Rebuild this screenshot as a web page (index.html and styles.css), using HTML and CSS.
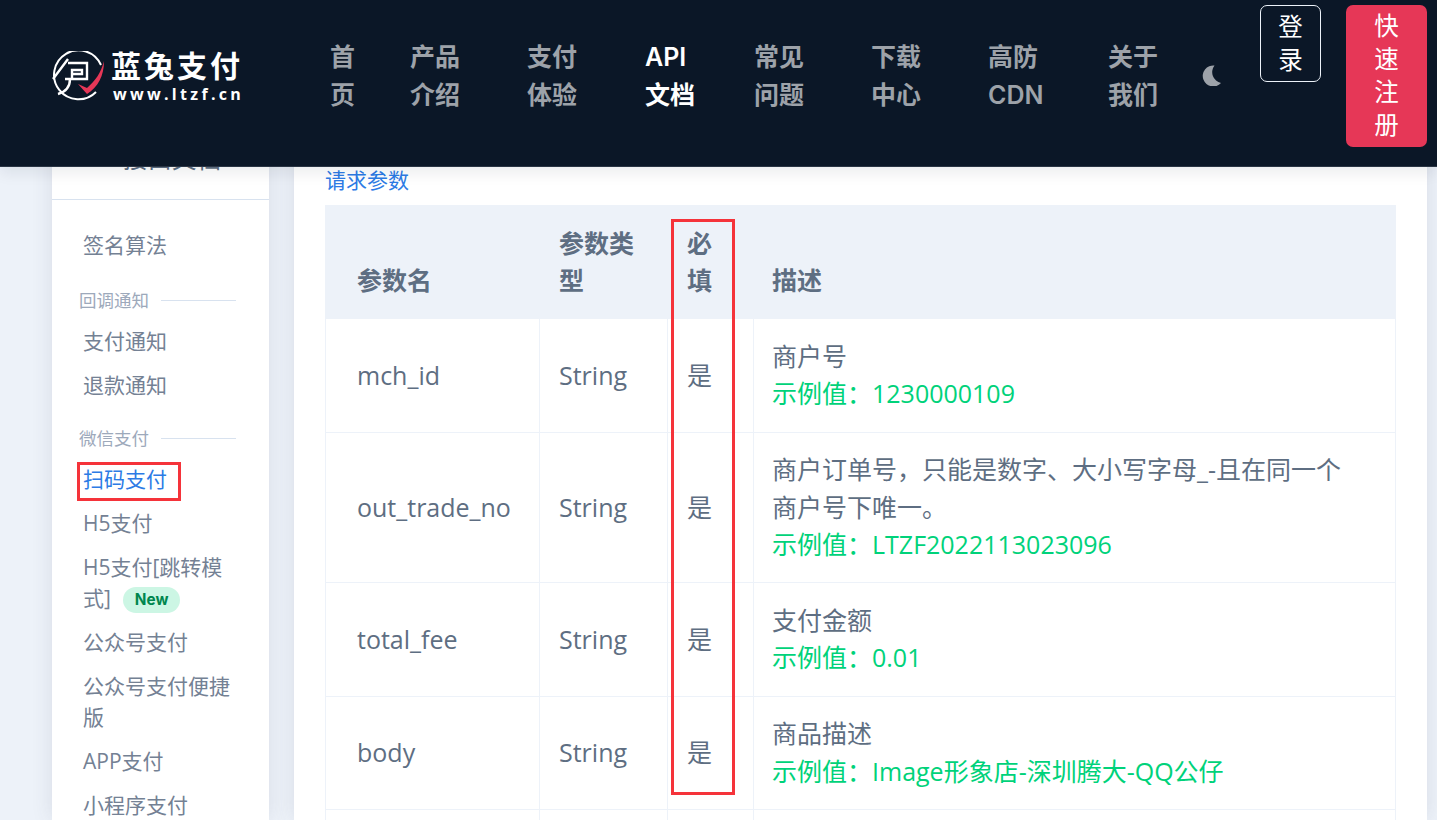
FILE: index.html
```html
<!DOCTYPE html>
<html lang="zh-CN">
<head>
<meta charset="utf-8">
<title>蓝兔支付 API文档</title>
<link rel="stylesheet" href="styles.css">
</head>
<body>
<header class="topbar">
  <a class="logo">
    <svg class="logo-mark" viewBox="0 0 54 52" width="54" height="52" aria-hidden="true">
      <path d="M49 14A24.5 24.5 0 1 0 44 41" fill="none" stroke="#fff" stroke-width="2"/>
      <path d="M16 8L1 28M16 12H35V28H13M20 19H30V23H20ZM20 19V28M18 28C18 36 13 41 6 43" fill="none" stroke="#fff" stroke-width="2.4"/>
      <path d="M26 33L35 37C43 30 49 22 52 10C52 25 46 36 35 43Z" fill="#e63757"/>
    </svg>
    <span class="logo-text">
      <span class="logo-name">蓝兔支付</span>
      <span class="logo-url">www.ltzf.cn</span>
    </span>
  </a>
  <nav class="nav">
    <a class="nav-link nav-narrow">首页</a>
    <a class="nav-link">产品介绍</a>
    <a class="nav-link">支付体验</a>
    <a class="nav-link nav-active">API文档</a>
    <a class="nav-link">常见问题</a>
    <a class="nav-link">下载中心</a>
    <a class="nav-link">高防CDN</a>
    <a class="nav-link">关于我们</a>
  </nav>
  <svg class="moon" viewBox="0 0 20 21" width="20" height="21" aria-hidden="true">
    <path d="M13.5 .5A10.5 10.5 0 1 0 20 18A11 11 0 0 1 13.5 .5Z" fill="#9da2a9"/>
  </svg>
  <a class="btn btn-outline">登录</a>
  <a class="btn btn-danger">快速注册</a>
</header>

<div class="page">
  <aside class="side">
    <div class="side-title">接口文档</div>
    <ul class="side-list">
      <li class="side-item">签名算法</li>
      <li class="side-label">回调通知</li>
      <li class="side-item">支付通知</li>
      <li class="side-item">退款通知</li>
      <li class="side-label side-label-tight">微信支付</li>
      <li class="side-item side-current">扫码支付</li>
      <li class="side-item">H5支付</li>
      <li class="side-item">H5支付[跳转模式] <span class="badge">New</span></li>
      <li class="side-item">公众号支付</li>
      <li class="side-item">公众号支付便捷版</li>
      <li class="side-item">APP支付</li>
      <li class="side-item">小程序支付</li>
    </ul>
  </aside>
  <main class="card">
    <a class="section-link">请求参数</a>
    <table class="params">
      <colgroup>
        <col class="col-name"><col class="col-type"><col class="col-req"><col>
      </colgroup>
      <thead>
        <tr><th>参数名</th><th>参数类型</th><th>必填</th><th>描述</th></tr>
      </thead>
      <tbody>
        <tr><td>mch_id</td><td>String</td><td>是</td><td>商户号<br><span class="eg">示例值：1230000109</span></td></tr>
        <tr><td>out_trade_no</td><td>String</td><td>是</td><td>商户订单号，只能是数字、大小写字母_-且在同一个商户号下唯一。<br><span class="eg">示例值：LTZF2022113023096</span></td></tr>
        <tr><td>total_fee</td><td>String</td><td>是</td><td>支付金额<br><span class="eg">示例值：0.01</span></td></tr>
        <tr><td>body</td><td>String</td><td>是</td><td>商品描述<br><span class="eg">示例值：Image形象店-深圳腾大-QQ公仔</span></td></tr>
        <tr class="row-empty"><td></td><td></td><td></td><td></td></tr>
      </tbody>
    </table>
  </main>
</div>

<div class="mark mark-side"></div>
<div class="mark mark-col"></div>
</body>
</html>
```
FILE: styles.css
```css
* { box-sizing: border-box; }
html, body { margin: 0; height: 820px; overflow: hidden; }
body {
  position: relative;
  background: #edf2f9;
  color: #5e6e82;
  font-family: "Open Sans", "Noto Sans CJK SC", sans-serif;
  font-size: 25px;
  line-height: 37.5px;
}
ul { list-style: none; margin: 0; padding: 0; }

.topbar {
  position: absolute;
  top: 0; left: 0; right: 0;
  z-index: 5;
  height: 167px;
  display: flex;
  padding: 5px 10px 0 52px;
  background: #0b1727;
  border-bottom: 1px solid #2a3544;
  box-shadow: 0 6px 14px rgba(11, 23, 39, .08);
}
.logo {
  width: 278px;
  height: 72px;
  margin-top: 41px;
  display: flex;
  align-items: flex-start;
  gap: 5px;
  color: #fff;
}
.logo-mark { flex: none; margin-top: 5px; }
.logo-text { display: flex; flex-direction: column; }
.logo-name {
  font-family: "Noto Sans CJK SC", sans-serif;
  font-size: 30px;
  font-weight: 700;
  line-height: 36px;
  letter-spacing: 3px;
}
.logo-url {
  margin: 1px 0 0 2px;
  font-family: "Open Sans", sans-serif;
  font-size: 16px;
  font-weight: 700;
  line-height: 22px;
  letter-spacing: 3.3px;
}
.nav {
  display: grid;
  grid-template-columns: 80px 117px 118px 109px 117px 117px 120px 93px;
  align-self: flex-start;
  margin-top: 34px;
  font-family: Inter, "Noto Sans CJK SC", sans-serif;
  font-weight: 600;
}
.nav-link { width: 50px; color: #9da2a9; }
.nav-narrow { width: 25px; }
.nav-active { color: #fff; }
.moon { flex: none; margin: 60px 39px 0 0; }
.btn {
  flex: none;
  display: block;
  text-align: center;
  color: #fff;
  line-height: 33px;
  font-size: 24.5px;
  font-family: "Noto Sans CJK SC", sans-serif;
  border-radius: 7px;
}
.btn-outline {
  width: 61px;
  height: 77px;
  padding: 3px 17px;
  border: 1px solid #edf2f9;
  margin-right: 25px;
}
.btn-danger {
  width: 81px;
  height: 142px;
  padding: 3px 28px;
  background: #e63757;
}

.page {
  display: flex;
  gap: 25px;
  height: 820px;
  padding: 130px 10px 0 52px;
  overflow: hidden;
}
.side, .card {
  background: #fff;
  box-shadow: 0 0 20px rgba(65, 69, 88, .12);
}
.side { flex: none; width: 217px; font-size: 21px; }
.side-title {
  height: 70px;
  padding: 11px 0 0 71px;
  line-height: 36px;
  font-size: 24.5px;
  border-bottom: 1px solid #d8e2ef;
}
.side-list { padding: 24px 31px 0; }
.side-item {
  color: #748194;
  line-height: 31.5px;
  padding: 6.125px 0;
}
.side-label {
  display: flex;
  align-items: center;
  gap: 12px;
  margin: 19.5px 0 7px -4px;
  color: #9da9bb;
  font-size: 17.5px;
  line-height: 26px;
}
.side-label-tight { margin-top: 17.5px; }
.side-label::after {
  content: "";
  width: 75px;
  flex: none;
  border-top: 1px solid #d8e2ef;
}
.side-current { color: #2c7be5; }
.badge {
  display: inline-block;
  margin-left: 7px;
  padding: 0 11.5px;
  border-radius: 14px;
  background: #ccf6e4;
  color: #00864e;
  font-family: Inter, sans-serif;
  font-size: 15.3px;
  font-weight: 700;
  line-height: 26px;
  vertical-align: 1px;
}

.card { flex: 1; min-width: 0; padding: 34px 31px 0; }
.section-link {
  display: block;
  height: 41px;
  color: #2c7be5;
  font-size: 21px;
  line-height: 32px;
}
.params {
  width: 1071px;
  table-layout: fixed;
  border-collapse: collapse;
}
.col-name { width: 214px; }
.col-type { width: 128px; }
.col-req { width: 86px; }
.params th, .params td {
  border: 1px solid #edf2f9;
  padding: 18.65px 19px;
  vertical-align: middle;
  text-align: left;
}
.params th:first-child, .params td:first-child { padding-left: 31px; }
.params th:last-child, .params td:last-child { padding: 18.65px 32px 18.65px 18px; }
.params th {
  background: #edf2f9;
  font-weight: 700;
  vertical-align: bottom;
}
.row-empty td { height: 113px; }
.eg { color: #00d27a; }

.mark {
  position: absolute;
  z-index: 6;
  border: 3px solid #f5333a;
}
.mark-side { left: 77px; top: 462px; width: 104px; height: 39px; }
.mark-col { left: 671px; top: 219px; width: 64px; height: 576px; }
```
